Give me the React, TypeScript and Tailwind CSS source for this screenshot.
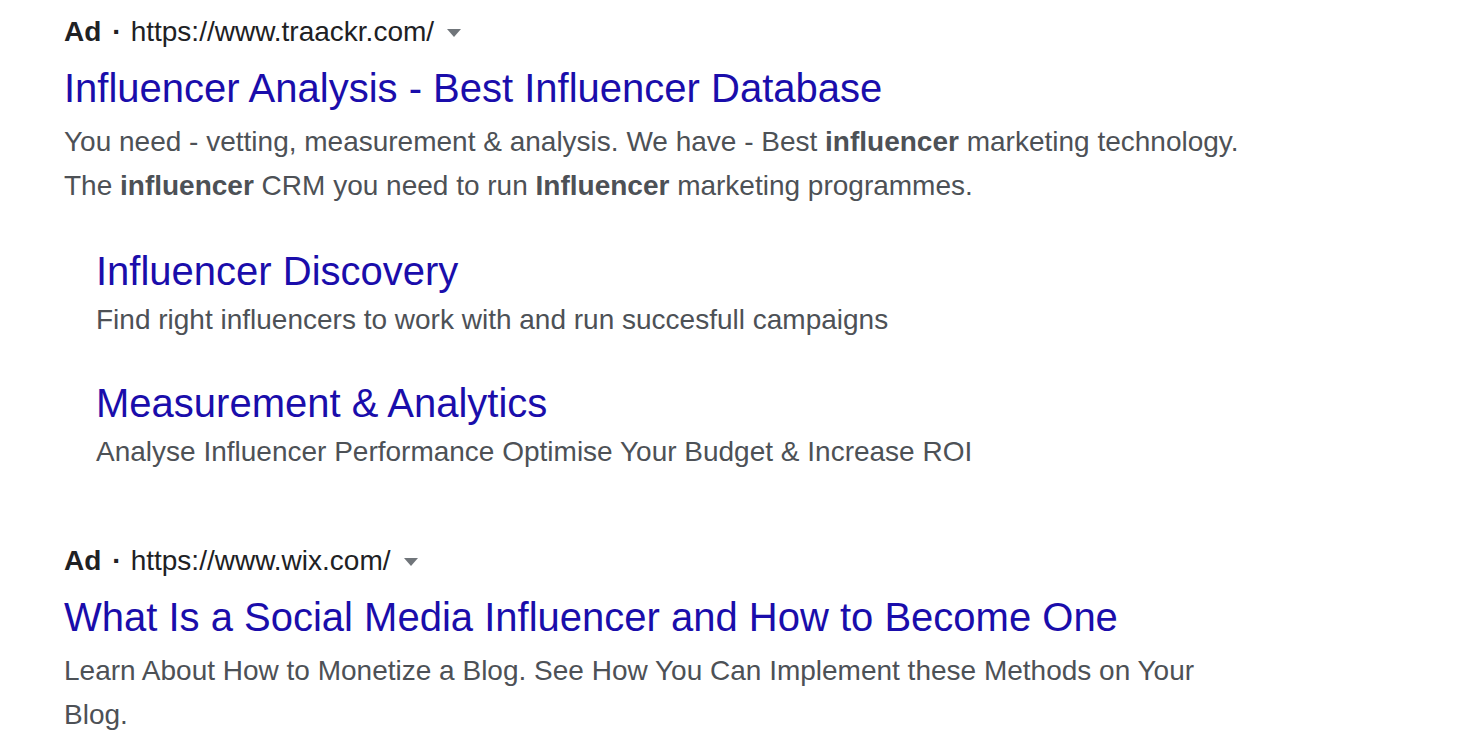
import React from "react";

const font = { fontFamily: '"Liberation Sans", Arial, sans-serif' };

function AdLine({ url }: { url: string }) {
  return (
    <div className="flex items-center h-[44px] text-[28px] text-[#202124] leading-[44px]">
      <span className="font-bold">Ad</span>
      <span className="ml-[11px] mr-[9px] font-bold">·</span>
      <span>{url}</span>
      <svg width="14" height="9" viewBox="0 0 14 9" className="ml-[13px] mt-[2px]">
        <path d="M0 0 L14 0 L7 8 Z" fill="#70757a" />
      </svg>
    </div>
  );
}

export default function App() {
  return (
    <div className="w-[1464px] h-[750px] bg-white overflow-hidden pl-[64px] pt-[10px]" style={font}>
      <AdLine url="https://www.traackr.com/" />
      <div className="text-[#1a0dab] text-[40px] leading-[56px] mt-[6px]">
        Influencer Analysis - Best Influencer Database
      </div>
      <div className="text-[#4d5156] text-[28px] leading-[44px] mt-[4px] w-[1200px]">
        You need - vetting, measurement &amp; analysis. We have - Best <b>influencer</b> marketing technology.
        <br />
        The <b>influencer</b> CRM you need to run <b>Influencer</b> marketing programmes.
      </div>
      <div className="pl-[32px] mt-[35px]">
        <div className="text-[#1a0dab] text-[40px] leading-[56px]">Influencer Discovery</div>
        <div className="text-[#4d5156] text-[28px] leading-[44px] mt-[-1px]">
          Find right influencers to work with and run succesfull campaigns
        </div>
        <div className="text-[#1a0dab] text-[40px] leading-[56px] mt-[33px]">Measurement &amp; Analytics</div>
        <div className="text-[#4d5156] text-[28px] leading-[44px] mt-[-1px]">
          Analyse Influencer Performance Optimise Your Budget &amp; Increase ROI
        </div>
      </div>
      <div className="mt-[65px]">
        <AdLine url="https://www.wix.com/" />
      </div>
      <div className="text-[#1a0dab] text-[40px] leading-[56px] mt-[6px]">
        What Is a Social Media Influencer and How to Become One
      </div>
      <div className="text-[#4d5156] text-[28px] leading-[44px] mt-[4px] w-[1200px]">
        Learn About How to Monetize a Blog. See How You Can Implement these Methods on Your Blog.
      </div>
    </div>
  );
}
